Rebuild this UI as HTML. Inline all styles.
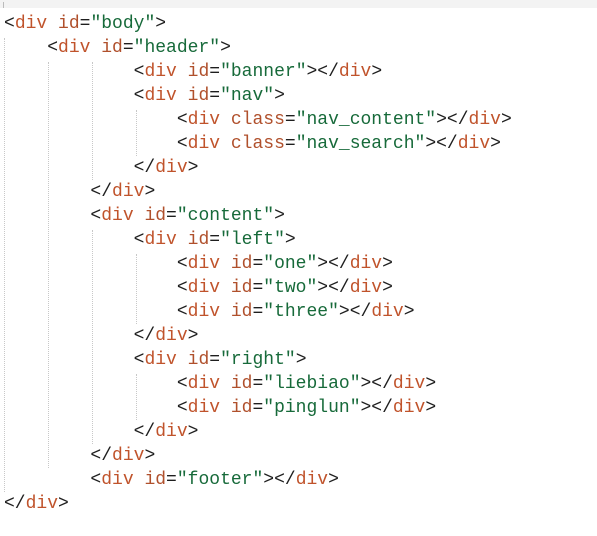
<!DOCTYPE html>
<html><head><meta charset="utf-8"><style>
html,body{margin:0;padding:0;background:#fff;width:597px;height:536px;overflow:hidden;position:relative}
.top{position:absolute;left:0;top:0;width:597px;height:8px;background:#f3f3f3}
.code{position:absolute;left:4px;top:12px;font:18px/24px "Liberation Mono",monospace;white-space:pre;color:#1e1e1e;margin:0}
.t{color:#c0532b}.a{color:#b0502c}.s{color:#176a3a}
.g{position:absolute;width:0;border-left:1px dotted #c8c8c8}
</style></head><body>
<div class="top"></div>
<div class="g" style="left:3px;top:2px;height:6px;border-left:1px solid #bbb"></div>
<div class="g" style="left:4px;top:38px;height:454px"></div>
<div class="g" style="left:48px;top:62px;height:406px"></div>
<div class="g" style="left:92px;top:62px;height:118px"></div>
<div class="g" style="left:92px;top:230px;height:214px"></div>
<div class="g" style="left:136px;top:110px;height:46px"></div>
<div class="g" style="left:136px;top:254px;height:70px"></div>
<div class="g" style="left:136px;top:374px;height:46px"></div>
<pre class="code">&lt;<span class="t">div</span> <span class="a">id</span>=<span class="s">"body"</span>&gt;
    &lt;<span class="t">div</span> <span class="a">id</span>=<span class="s">"header"</span>&gt;
            &lt;<span class="t">div</span> <span class="a">id</span>=<span class="s">"banner"</span>&gt;&lt;/<span class="t">div</span>&gt;
            &lt;<span class="t">div</span> <span class="a">id</span>=<span class="s">"nav"</span>&gt;
                &lt;<span class="t">div</span> <span class="a">class</span>=<span class="s">"nav_content"</span>&gt;&lt;/<span class="t">div</span>&gt;
                &lt;<span class="t">div</span> <span class="a">class</span>=<span class="s">"nav_search"</span>&gt;&lt;/<span class="t">div</span>&gt;
            &lt;/<span class="t">div</span>&gt;
        &lt;/<span class="t">div</span>&gt;
        &lt;<span class="t">div</span> <span class="a">id</span>=<span class="s">"content"</span>&gt;
            &lt;<span class="t">div</span> <span class="a">id</span>=<span class="s">"left"</span>&gt;
                &lt;<span class="t">div</span> <span class="a">id</span>=<span class="s">"one"</span>&gt;&lt;/<span class="t">div</span>&gt;
                &lt;<span class="t">div</span> <span class="a">id</span>=<span class="s">"two"</span>&gt;&lt;/<span class="t">div</span>&gt;
                &lt;<span class="t">div</span> <span class="a">id</span>=<span class="s">"three"</span>&gt;&lt;/<span class="t">div</span>&gt;
            &lt;/<span class="t">div</span>&gt;
            &lt;<span class="t">div</span> <span class="a">id</span>=<span class="s">"right"</span>&gt;
                &lt;<span class="t">div</span> <span class="a">id</span>=<span class="s">"liebiao"</span>&gt;&lt;/<span class="t">div</span>&gt;
                &lt;<span class="t">div</span> <span class="a">id</span>=<span class="s">"pinglun"</span>&gt;&lt;/<span class="t">div</span>&gt;
            &lt;/<span class="t">div</span>&gt;
        &lt;/<span class="t">div</span>&gt;
        &lt;<span class="t">div</span> <span class="a">id</span>=<span class="s">"footer"</span>&gt;&lt;/<span class="t">div</span>&gt;
&lt;/<span class="t">div</span>&gt;</pre>
</body></html>
